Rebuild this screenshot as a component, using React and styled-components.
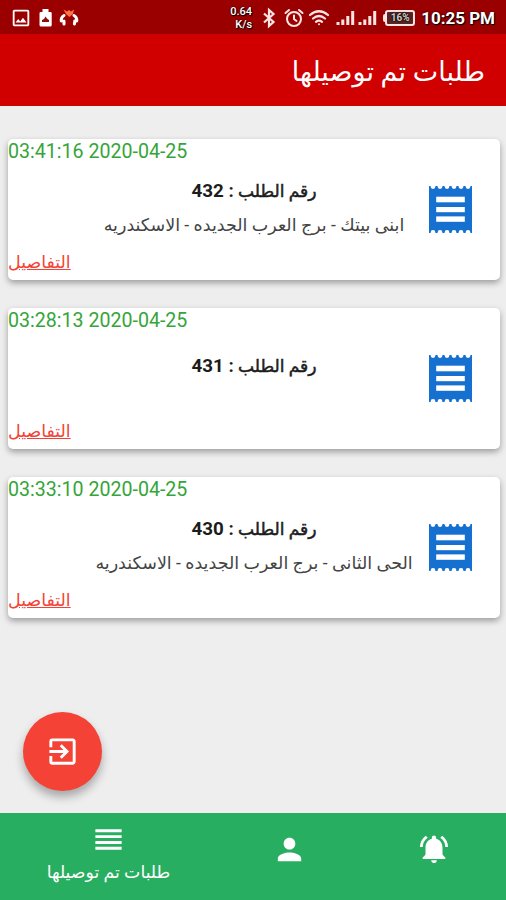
import React, { useState } from "react";
import styled, { createGlobalStyle } from "styled-components";
import {
  MdExitToApp,
  MdNotificationsActive,
  MdOutlineImage,
  MdPerson,
  MdReorder,
} from "react-icons/md";

const orders = [
  {
    id: 432,
    date: "03:41:16 2020-04-25",
    address: "ابنى بيتك - برج العرب الجديده - الاسكندريه",
  },
  { id: 431, date: "03:28:13 2020-04-25", address: "" },
  {
    id: 430,
    date: "03:33:10 2020-04-25",
    address: "الحى الثانى - برج العرب الجديده - الاسكندريه",
  },
];

const notches = [0, 1, 2, 3, 4, 5];

function Receipt() {
  return (
    <svg width="43" height="47" viewBox="0 0 43 47">
      <rect width="43" height="47" fill="#1570cf" />
      <g fill="#fff">
        {notches.map((n) => (
          <React.Fragment key={n}>
            <circle cx={4 + n * 7} cy="0.5" r="2.4" />
            <circle cx={4 + n * 7} cy="46.5" r="2.4" />
          </React.Fragment>
        ))}
        <rect x="7.2" y="10.7" width="28.6" height="5.6" />
        <rect x="7.2" y="21" width="28.6" height="5.2" />
        <rect x="7.2" y="30.4" width="28.6" height="5.4" />
      </g>
    </svg>
  );
}

function Bluetooth() {
  return (
    <svg
      width="22"
      height="22"
      viewBox="0 0 22 22"
      fill="none"
      stroke="#ffe4e4"
      strokeWidth="2.2"
    >
      <path d="M6 6.500L15.500 15 11 19V3l4.500 4L6 15.500" />
    </svg>
  );
}

function Alarm() {
  return (
    <svg
      width="20"
      height="20"
      viewBox="0 0 20 20"
      fill="none"
      stroke="#ffe4e4"
      strokeWidth="2"
      strokeLinecap="round"
    >
      <circle cx="10" cy="11" r="7" />
      <path d="M1.500 5L5 2M18.500 5L15 2M10 7.500V11l2.500 2" />
    </svg>
  );
}

function Wifi() {
  return (
    <svg
      width="22"
      height="18"
      viewBox="0 0 22 18"
      fill="none"
      stroke="#ffe4e4"
      strokeWidth="2.2"
      strokeLinecap="round"
    >
      <path d="M2 6Q11-1.500 20 6M5 9.500q6-5 12 0M8 12.800q3-2.400 6 0" />
      <circle cx="11" cy="15.2" r="1" fill="#ffe4e4" stroke="none" />
    </svg>
  );
}

function Signal() {
  return (
    <svg width="19" height="16" viewBox="0 0 19 16" fill="#ffe4e4">
      <rect x="0.5" y="12" width="3" height="3" />
      <rect x="5.3" y="9.5" width="3" height="5.5" />
      <rect x="10.3" y="6" width="3" height="9" />
      <rect x="15.2" y="1" width="3" height="14" />
    </svg>
  );
}

function StatusBar() {
  return (
    <Status>
      <Left>
        <MdOutlineImage size={22} />
        <svg width="13" height="20" viewBox="0 0 13 20">
          <path
            fill="#fff"
            d="M3.500 1h6v3h2a1.200 1.200 0 0 1 1.200 1.200V17a1.500 1.500 0 0 1-1.500 1.500h-9.500A1.500 1.500 0 0 1 .5 17V5.200A1.200 1.200 0 0 1 1.700 4h1.800z"
          />
          <path fill="#8a1010" d="M3 14V12l2-1 1.500-2.500 1.700 2.200L10 12v2z" />
        </svg>
        <svg width="20" height="20" viewBox="0 0 20 20">
          <path fill="#ff7043" d="M4.500 1.500l3.500 2L10 2l2 1.500 3-2L14 6l-3.700 3L7 6z" />
          <path
            fill="none"
            stroke="#fff"
            strokeWidth="3"
            strokeLinecap="round"
            d="M5 7.500Q2 9 2.200 13M5 13v3M15 7.500Q18 9 17.800 13M15.800 13l-.4 3"
          />
        </svg>
      </Left>
      <Right>
        <Speed>
          <span>0.64</span>
          <span>K/s</span>
        </Speed>
        <Connections>
          <Bluetooth />
          <Alarm />
          <Wifi />
        </Connections>
        <Bars>
          <Signal />
          <Signal />
        </Bars>
        <Battery>
          <span>16%</span>
        </Battery>
        <Clock>10:25 PM</Clock>
      </Right>
    </Status>
  );
}

function App() {
  const [active, setActive] = useState("orders");

  return (
    <Screen>
      <GlobalStyle />
      <StatusBar />
      <Header>
        <h1>طلبات تم توصيلها</h1>
      </Header>
      <List>
        {orders.map((order) => (
          <Card key={order.id}>
            <OrderDate>{order.date}</OrderDate>
            <Body>
              <Info>
                <OrderNumber>
                  رقم الطلب <b>: {order.id}</b>
                </OrderNumber>
                <Address $empty={!order.address}>{order.address}</Address>
              </Info>
              <Receipt />
            </Body>
            <Details href="#">التفاصيل</Details>
          </Card>
        ))}
      </List>
      <Logout>
        <MdExitToApp size={35} />
      </Logout>
      <Nav>
        <NavItem $grow={217} onClick={() => setActive("orders")}>
          <MdReorder size={35} />
          {active === "orders" && <span>طلبات تم توصيلها</span>}
        </NavItem>
        <NavItem $grow={145} onClick={() => setActive("profile")}>
          <MdPerson size={35} />
        </NavItem>
        <NavItem $grow={144} onClick={() => setActive("alerts")}>
          <MdNotificationsActive size={34} />
        </NavItem>
      </Nav>
    </Screen>
  );
}

export default App;

const GlobalStyle = createGlobalStyle`
  * {
    box-sizing: border-box;
  }
  body {
    margin: 0;
    font-family: Roboto, "DejaVu Sans", sans-serif;
  }
`;
const Screen = styled.div`
  width: 506px;
  height: 900px;
  background: #eeeeee;
  display: flex;
  flex-direction: column;
  position: relative;
  overflow: hidden;
`;
const Status = styled.div`
  height: 34px;
  flex-shrink: 0;
  background: #9b0000;
  color: #fff;
  display: flex;
  justify-content: space-between;
  align-items: center;
  padding: 1px 11px 0 10px;
`;
const Left = styled.div`
  display: flex;
  align-items: center;
  gap: 7px;
`;
const Right = styled.div`
  display: flex;
  align-items: center;
  gap: 6px;
  color: #ffe4e4;
`;
const Speed = styled.div`
  display: flex;
  flex-direction: column;
  align-items: flex-end;
  font-size: 11px;
  line-height: 13px;
  font-weight: 500;
  color: #fff;
  text-shadow: 0 0 2px #000, 1px 1px 1px #000;
`;
const Connections = styled.div`
  display: flex;
  align-items: center;
  gap: 4px;
`;
const Bars = styled.div`
  display: flex;
  gap: 3px;
`;
const Battery = styled.div`
  position: relative;
  width: 30px;
  height: 16px;
  margin-left: 2px;
  border: 2px solid #ffe4e4;
  border-radius: 3px;
  background: #5a2424;
  display: flex;
  align-items: center;
  justify-content: center;
  font-size: 10px;
  font-weight: 700;
  color: #ccc;
  text-shadow: 0 0 2px #000, 0 0 2px #000;
  &::before {
    content: "";
    position: absolute;
    left: -4px;
    top: 2px;
    width: 3px;
    height: 8px;
    border-radius: 2px 0 0 2px;
    background: #ffe4e4;
  }
`;
const Clock = styled.div`
  font-size: 17px;
  font-weight: 700;
  color: #fff;
  white-space: nowrap;
  text-shadow: 0 0 2px #000, 1px 1px 1px #000;
`;
const Header = styled.header`
  height: 72px;
  flex-shrink: 0;
  background: #d00000;
  direction: rtl;
  display: flex;
  align-items: center;
  padding: 4px 21px 0;
  h1 {
    margin: 0;
    font-size: 27px;
    font-weight: 400;
    color: #fff;
  }
`;
const List = styled.main`
  flex: 1;
  display: flex;
  flex-direction: column;
  gap: 28px;
  padding: 33px 6px 0 8px;
`;
const Card = styled.div`
  height: 141px;
  flex-shrink: 0;
  background: #fff;
  border-radius: 5px;
  box-shadow: 0 3px 6px rgba(0, 0, 0, 0.34);
  display: flex;
  flex-direction: column;
`;
const OrderDate = styled.div`
  height: 24px;
  line-height: 26px;
  font-size: 19.6px;
  color: #35a53a;
`;
const Body = styled.div`
  flex: 1;
  display: grid;
  grid-template-columns: 71px 1fr 71px;
  align-items: center;
  svg {
    grid-column: 3;
  }
`;
const Info = styled.div`
  grid-column: 2;
  direction: rtl;
  display: flex;
  flex-direction: column;
  align-items: center;
  white-space: nowrap;
  padding-bottom: 5px;
`;
const OrderNumber = styled.div`
  height: 35px;
  line-height: 35px;
  font-size: 17.1px;
  font-weight: 400;
  -webkit-text-stroke: 0.5px #1c1c1c;
  color: #1c1c1c;
  b {
    font-size: 18.8px;
    -webkit-text-stroke: 0;
  }
`;
const Address = styled.div`
  height: ${(props) => (props.$empty ? "20px" : "32px")};
  line-height: 32px;
  font-size: 17.5px;
  color: #444;
`;
const Details = styled.a`
  align-self: flex-start;
  height: 24px;
  line-height: 13px;
  font-size: 17.4px;
  color: #f44336;
`;
const Logout = styled.button`
  position: absolute;
  left: 23px;
  top: 712px;
  width: 79px;
  height: 79px;
  border: none;
  border-radius: 50%;
  background: #f44336;
  color: #fff;
  display: flex;
  align-items: center;
  justify-content: center;
  box-shadow: 0 6px 10px rgba(0, 0, 0, 0.3);
`;
const Nav = styled.nav`
  height: 87px;
  flex-shrink: 0;
  background: #27ae60;
  display: flex;
`;
const NavItem = styled.button`
  flex: ${(props) => props.$grow} 0 0;
  border: none;
  padding: 0;
  background: none;
  color: #fff;
  display: flex;
  flex-direction: column;
  align-items: center;
  padding-top: ${(props) => (props.$grow > 200 ? "9px" : "19px")};
  span {
    font-family: Roboto, "DejaVu Sans", sans-serif;
    font-size: 17.3px;
    line-height: 30px;
    white-space: nowrap;
    direction: rtl;
  }
`;
